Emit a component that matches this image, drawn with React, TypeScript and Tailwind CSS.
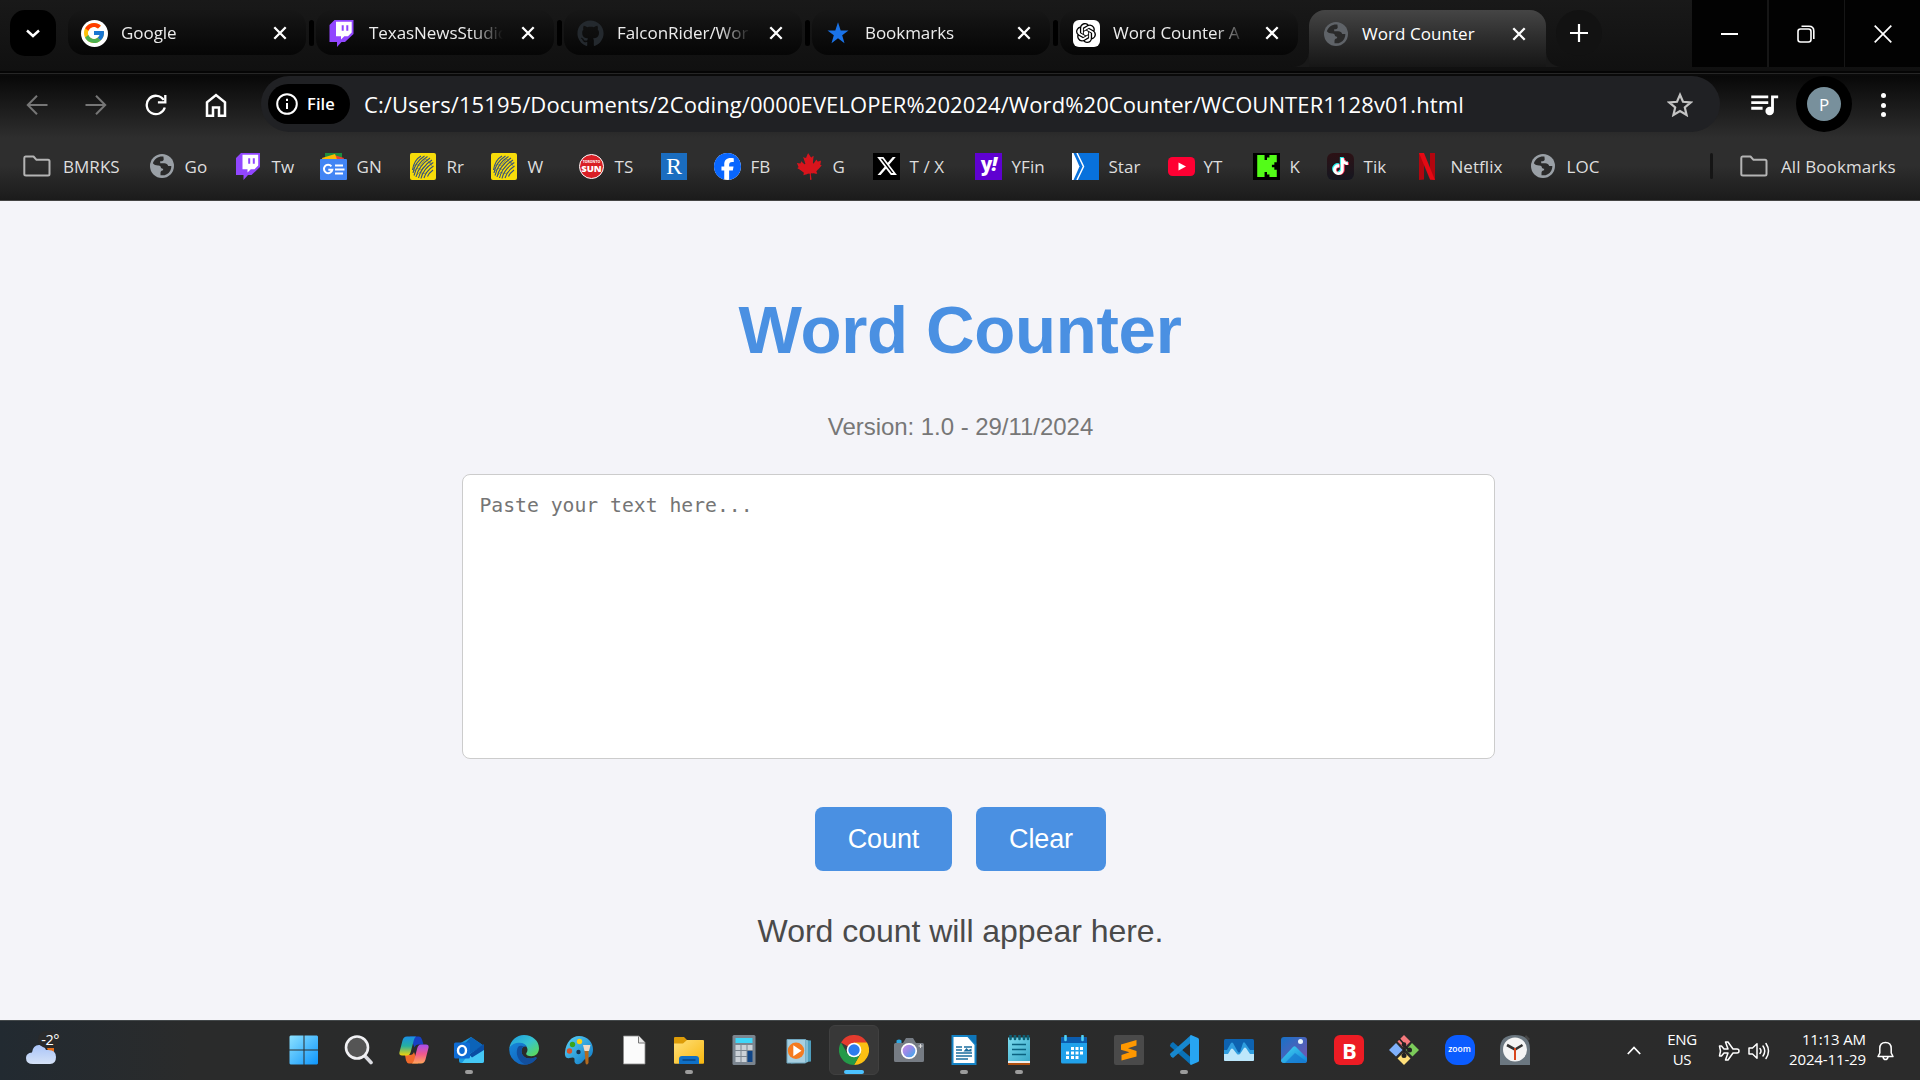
import React, { useId } from "react";
import { FaCanadianMapleLeaf, FaFacebook, FaGithub, FaXTwitter } from "react-icons/fa6";
import { FcGoogle } from "react-icons/fc";
import { SiKick, SiOpenai, SiTiktok } from "react-icons/si";
import { MdQueueMusic } from "react-icons/md";

type IconProps = { className?: string };

const Globe = ({ className = "" }: IconProps) => (
  <svg viewBox="0 0 24 24" className={className}>
    <circle cx="12" cy="12" r="12" fill="currentColor" />
    <path
      d="M13.4 2.6C9 1.9 4.3 4.6 2.9 9.2c1.2 1.7 3.2 2.3 5.6 2.2 1.6 0 2.2.8 2.4 2.2.2.9 1 1.200 2.200 1.100v1.600c-1.400.3-2.600 1.100-2.600 2.500v2.400c3.800.700 7.600-1 9.600-4.300.9-1.500 1.300-3.200 1.200-4.900h-3.100c-.6-1.700-1.900-2.700-3.900-2.700h-4.100V7.200h1.600c1.200 0 1.900-.8 1.900-1.900z"
      fill="#2a2a2a"
    />
  </svg>
);

const TwitchIcon = ({ className = "" }: IconProps) => (
  <svg viewBox="0 0 24 27" className={className}>
    <path d="M5 0h19v14l-8.500 8H12l-4.500 5v-5H0V5z" fill="#9146ff" />
    <path d="M6.500 1.800H22.200V12.500L18.500 16.200H14.800L11.500 19.600V16.200H6.500z" fill="#fff" />
    <path d="M12.200 5.300h2v5.500h-2zM16.800 5.300h2v5.500h-2z" fill="#9146ff" />
  </svg>
);

const FolderIcon = ({ className = "" }: IconProps) => (
  <svg viewBox="0 0 28 22" fill="none" stroke="#b4b4b4" strokeWidth="2" strokeLinejoin="round" className={className}>
    <path d="M2.500 1.500h8l3 3.300h11.500q1.500 0 1.500 1.500V19q0 1.500-1.500 1.500H3Q1.300 20.500 1.300 19V3q0-1.500 1.200-1.500z" />
  </svg>
);

const NewsIcon = () => (
  <svg viewBox="0 0 27 27" className="size-[27px]">
    <path d="M5 0h17v9H5z" fill="#1e8e3e" />
    <path d="M14 2l10 3-2 6h-9z" fill="#ea4335" />
    <path d="M2 5l13-4 3 8H3z" fill="#fbbc04" />
    <rect y="6" width="27" height="21" rx="1" fill="#4285f4" />
    <path d="M11.400 13.300A4.200 4.200 0 1 0 12.300 16.800H8.300" fill="none" stroke="#fff" strokeWidth="2" />
    <path d="M15 12.500h8M15 16.500h9.500M15 20.500h8" stroke="#fff" strokeWidth="2" />
  </svg>
);

const RogersBall = () => (
  <svg viewBox="0 0 26 27" className="h-[27px] w-[26px]">
    <rect width="26" height="27" rx="2" fill="#f7dc0a" />
    <g fill="none" stroke="#35507e" strokeWidth="1.100">
      <path d="M2.500 17Q4 7 11 3M3 20Q5 9 14.500 3M4 22.500Q7 10 17.500 3.500M6 24Q8.500 13 20 5M8.500 25Q11 14 22 7M11 25.500Q13 16 23.300 9.500M14 25Q16 18 23.500 13M17.500 23.500Q19 20 23 17" />
      <path d="M4 13Q6 10 8 12T13 9T18 8T21 9M4 18Q7 14 10 16T16 12T22 13M7 22Q9 18 12 20T19 17" strokeWidth=".5" />
    </g>
  </svg>
);

const SunIcon = () => (
  <div className="ml-[1px] flex size-[25px] flex-col items-center justify-center rounded-full border border-white bg-[#d91f26] text-white">
    <span className="font-['Open_Sans',sans-serif] text-[3.500px] leading-[4px] font-bold tracking-normal">TORONTO</span>
    <span className="font-['Open_Sans',sans-serif] text-[9.500px] leading-[9px] font-extrabold tracking-normal">SUN</span>
  </div>
);

const XLogo = () => (
  <div className="flex size-[27px] items-center justify-center bg-black text-white">
    <FaXTwitter className="size-[22px]" />
  </div>
);

const YahooIcon = () => (
  <div className="flex size-[27px] items-center justify-center bg-[#5f01d1] pb-[3px] font-['Open_Sans',sans-serif] text-[19px] leading-none font-extrabold tracking-[-1px] text-white">
    y<span className="italic">!</span>
  </div>
);

const StarPaperIcon = () => (
  <svg viewBox="0 0 27 27" className="size-[27px]">
    <path d="M0 0h27v27H0z" fill="#0871dc" />
    <path d="M0 0h1.500l6 13.500L1.500 27H0z" fill="#fff" />
    <path d="M5 0l6.500 13.500L5 27" fill="none" stroke="#fff" strokeWidth="1.500" />
  </svg>
);

const YouTubeIcon = () => (
  <svg viewBox="0 0 27 19" className="ml-[1px] h-[19px] w-[27px]">
    <rect width="27" height="19" rx="4.500" fill="#f03" />
    <path d="M10.500 5.500l7.500 4-7.500 4z" fill="#fff" />
  </svg>
);

const KickTile = () => (
  <div className="flex size-[27px] items-center justify-center bg-black text-[#53fc18]">
    <SiKick className="size-[22px]" />
  </div>
);

const TikTokTile = () => (
  <div className="flex size-[27px] items-center justify-center rounded-[6px] bg-gradient-to-b from-[#2c1014] to-[#141620] text-white">
    <SiTiktok className="size-[17px] [filter:drop-shadow(1px_0.5px_0_#fe2c55)_drop-shadow(-1px_-0.5px_0_#25f4ee)]" />
  </div>
);

const NetflixN = () => (
  <svg viewBox="0 0 16 27" className="ml-[5px] h-[27px] w-[16px]">
    <path d="M0 0h5v26.500L0 27zM11 0h5v27l-5-.5z" fill="#b1060f" />
    <path d="M0 0h5l11 27-5-.6z" fill="#e50914" />
  </svg>
);

const CloseX = () => (
  <svg viewBox="0 0 14 14" className="size-[14px] shrink-0" stroke="#fff" strokeWidth="2.300">
    <path d="M1.300 1.300l11.400 11.400M12.700 1.300L1.300 12.700" />
  </svg>
);

const BlueStar = () => (
  <svg viewBox="0 0 24 24" className="ml-[1px] size-[24px]" fill="#1a73e8">
    <path d="M12 17.300l6.500 4.900-2.300-8L22.500 9.400h-7.800L12 1.200 9.300 9.400H1.500l6.300 4.800-2.300 8z" />
  </svg>
);

const inactiveTabs: { title: string; icon: React.ReactNode }[] = [
  {
    title: "Google",
    icon: (
      <div className="flex size-[27px] items-center justify-center rounded-full bg-white">
        <FcGoogle className="size-[24px]" />
      </div>
    ),
  },
  { title: "TexasNewsStudio", icon: <TwitchIcon className="h-[27px] w-[25px]" /> },
  { title: "FalconRider/Wor", icon: <FaGithub className="size-[27px] text-[#24292e]" /> },
  { title: "Bookmarks", icon: <BlueStar /> },
  {
    title: "Word Counter A",
    icon: (
      <div className="flex size-[27px] items-center justify-center rounded-[6px] bg-white text-black">
        <SiOpenai className="size-[20px]" />
      </div>
    ),
  },
];

function TabStrip() {
  return (
    <div className="flex h-[71px] bg-gradient-to-b from-[#191919] to-[#101010] pt-[10px] pl-[10px]">
      <button className="flex size-[46px] items-center justify-center rounded-[15px] bg-black">
        <svg viewBox="0 0 14 9" className="h-[9px] w-[14px]" fill="none" stroke="#fff" strokeWidth="2.400">
          <path d="M1 1.500l6 5.500 6-5.500" />
        </svg>
      </button>
      <div className="ml-[12px] flex">
        {inactiveTabs.map((tab, i) => (
          <div key={tab.title} className="flex w-[248px]">
            <div className="flex h-[45px] w-[238px] items-center rounded-[16px] bg-gradient-to-b from-[#171717] to-[#060606] pt-[1px] pr-[19px] pl-[12.500px]">
              <div className="w-[40.500px] shrink-0">{tab.icon}</div>
              <div className="mr-auto w-[134px] overflow-hidden text-[17px] tracking-[-0.050px] whitespace-nowrap text-[#ececec] [mask-image:linear-gradient(to_right,black_76%,transparent)]">
                {tab.title}
              </div>
              <CloseX />
            </div>
            {i < 4 && <div className="mt-[10px] ml-[3px] h-[26px] w-[5px] rounded-full bg-black" />}
          </div>
        ))}
      </div>
      <div className="relative ml-px flex h-[57px] w-[237px] items-center rounded-t-[16px] bg-gradient-to-b from-[#454545] to-[#161616] pr-[20px] pb-[10px] pl-[15px]">
        <svg viewBox="0 0 18 18" className="absolute bottom-0 -left-[18px] size-[18px]">
          <path d="M18 0v18H0Q18 18 18 0z" fill="#191919" />
        </svg>
        <svg viewBox="0 0 18 18" className="absolute -right-[18px] bottom-0 size-[18px]">
          <path d="M0 0v18h18Q0 18 0 0z" fill="#191919" />
        </svg>
        <Globe className="mr-[14px] size-[24px] text-[#5f6368]" />
        <div className="mr-auto text-[17px] tracking-[0.050px] text-white">Word Counter</div>
        <CloseX />
      </div>
      <button className="ml-[10px] flex size-[46px] items-center justify-center rounded-full bg-[#121212]">
        <svg viewBox="0 0 18 18" className="size-[18px]" stroke="#fff" strokeWidth="2.200">
          <path d="M9 0v18M0 9h18" />
        </svg>
      </button>
      <div className="-mt-[10px] ml-auto flex h-[67px] gap-[1.500px] bg-[#161616]">
        <div className="flex w-[75px] items-center justify-center bg-[#020202]">
          <div className="h-[2px] w-[17px] bg-white" />
        </div>
        <div className="flex w-[75px] items-center justify-center bg-[#020202]">
          <svg viewBox="0 0 18 18" className="size-[18px]" fill="none" stroke="#fff" strokeWidth="1.600">
            <rect x="1" y="4" width="13" height="13" rx="2.500" />
            <path d="M4.500 1.300H12Q16.800 1.300 16.800 6v8" />
          </svg>
        </div>
        <div className="flex w-[75px] items-center justify-center bg-[#020202]">
          <svg viewBox="0 0 18 18" className="size-[18px]" stroke="#fff" strokeWidth="1.700">
            <path d="M.7.7l16.600 16.600M17.300.7L.7 17.300" />
          </svg>
        </div>
      </div>
    </div>
  );
}

function AddressRow() {
  return (
    <div className="flex h-[56px] items-center pl-[26px]">
      <svg viewBox="0 0 22 20" className="mt-[2px] h-[20px] w-[22px]" fill="none" stroke="#767676" strokeWidth="2">
        <path d="M21.500 10H2M11 .8L1.800 10l9.200 9.200" />
      </svg>
      <svg viewBox="0 0 22 20" className="mt-[2px] ml-[37px] h-[20px] w-[22px]" fill="none" stroke="#767676" strokeWidth="2">
        <path d="M.5 10H20M11 .8l9.200 9.200-9.200 9.200" />
      </svg>
      <svg viewBox="0 0 22 22" className="mt-[2px] ml-[38px] size-[22px]" fill="none" stroke="#fff" strokeWidth="2.300">
        <path d="M19.800 13.500A9.200 9.200 0 1 1 18.700 6" />
        <path d="M20.300 1v7.400h-7.400" />
      </svg>
      <svg viewBox="0 0 22 24" className="mt-[1px] ml-[38px] h-[24px] w-[22px]" fill="none" stroke="#fff" strokeWidth="2.500">
        <path d="M2 22.700V9.300L11 2l9 7.300v13.400h-6V14.500H8v8.200z" />
      </svg>
      <div className="ml-[34px] flex h-[56px] w-[1459px] items-center rounded-full bg-[#202124] pr-[27px] pl-[7px]">
        <div className="flex h-[40px] w-[82px] items-center rounded-full bg-black pl-[8px]">
          <svg viewBox="0 0 22 22" className="size-[22px]" fill="none" stroke="#fff" strokeWidth="2">
            <circle cx="11" cy="11" r="9.800" />
            <path d="M11 10v6M11 5.800v2.200" />
          </svg>
          <span className="ml-[9px] pt-px text-[16.500px] font-semibold tracking-[0.100px] text-white">File</span>
        </div>
        <span className="ml-[14px] text-[22px] tracking-[0.085px] whitespace-nowrap text-white">
          C:/Users/15195/Documents/2Coding/0000EVELOPER%202024/Word%20Counter/WCOUNTER1128v01.html
        </span>
        <svg viewBox="0 0 26 25" className="ml-auto h-[25px] w-[26px]" fill="none" stroke="#c4c4c4" strokeWidth="2.200">
          <path d="M13 2.800l3 7 7.600.7-5.800 5 1.800 7.500-6.600-4-6.600 4 1.800-7.500-5.800-5 7.600-.7z" />
        </svg>
      </div>
      <MdQueueMusic className="ml-[27px] size-[34px] text-white" />
      <div className="ml-[15px] flex size-[56px] items-center justify-center rounded-full bg-black">
        <div className="flex size-[34px] items-center justify-center rounded-full bg-[#78909c] pt-px text-[17px] text-white">P</div>
      </div>
      <div className="mt-[2px] ml-[29px] flex flex-col gap-[4.500px]">
        <div className="size-[5px] rounded-full bg-white" />
        <div className="size-[5px] rounded-full bg-white" />
        <div className="size-[5px] rounded-full bg-white" />
      </div>
    </div>
  );
}

const bookmarks: { label: string; width: string; icon: React.ReactNode }[] = [
  { label: "Go", width: "w-[87px]", icon: <Globe className="ml-[2px] size-[24px] text-[#9aa0a6]" /> },
  { label: "Tw", width: "w-[85px]", icon: <TwitchIcon className="ml-px h-[27px] w-[24px]" /> },
  { label: "GN", width: "w-[90px]", icon: <NewsIcon /> },
  { label: "Rr", width: "w-[81px]", icon: <RogersBall /> },
  { label: "W", width: "w-[87px]", icon: <RogersBall /> },
  { label: "TS", width: "w-[83px]", icon: <SunIcon /> },
  {
    label: "",
    width: "w-[53px]",
    icon: (
      <div className="flex h-[27px] w-[26px] items-center justify-center bg-[#1a6dc0] font-['Liberation_Serif',serif] text-[24px] leading-none text-white">
        R
      </div>
    ),
  },
  {
    label: "FB",
    width: "w-[82px]",
    icon: (
      <div className="rounded-full bg-white">
        <FaFacebook className="size-[27px] text-[#0866ff]" />
      </div>
    ),
  },
  { label: "G", width: "w-[77px]", icon: <FaCanadianMapleLeaf className="size-[27px] -rotate-6 text-[#d8141c]" /> },
  { label: "T / X", width: "w-[102px]", icon: <XLogo /> },
  { label: "YFin", width: "w-[97px]", icon: <YahooIcon /> },
  { label: "Star", width: "w-[95px]", icon: <StarPaperIcon /> },
  { label: "YT", width: "w-[86px]", icon: <YouTubeIcon /> },
  { label: "K", width: "w-[74px]", icon: <KickTile /> },
  { label: "Tik", width: "w-[87px]", icon: <TikTokTile /> },
  { label: "Netflix", width: "w-[116px]", icon: <NetflixN /> },
  { label: "LOC", width: "w-[80px]", icon: <Globe className="ml-[1px] size-[24px] text-[#9aa0a6]" /> },
];

function BookmarkBar() {
  return (
    <div className="flex h-[68px] items-center text-[17px] tracking-[0.050px] whitespace-nowrap text-[#dedede]">
      <div className="flex w-[148px] items-center pl-[23px]">
        <FolderIcon className="mr-[12px] h-[22px] w-[28px]" />
        <span className="pt-px">BMRKS</span>
      </div>
      {bookmarks.map((b, i) => (
        <div key={i} className={`flex shrink-0 items-center ${b.width}`}>
          <div className="flex w-[36.500px] shrink-0 items-center">{b.icon}</div>
          <span className="pt-px">{b.label}</span>
        </div>
      ))}
      <div className="ml-auto h-[26px] w-[3px] rounded-full bg-[#151515]" />
      <FolderIcon className="ml-[27px] h-[22px] w-[28px]" />
      <span className="mr-[25px] ml-[13px] w-[114px] pt-px tracking-[0.100px]">All Bookmarks</span>
    </div>
  );
}

function WordCounterPage() {
  return (
    <main className="flex h-[819px] flex-col items-center bg-[#f4f4f9] pt-[91px] font-['Liberation_Sans',Arial,sans-serif]">
      <h1 className="text-[67.200px] leading-[76px] font-bold tracking-[-0.300px] text-[#4a90e2]">Word Counter</h1>
      <p className="mt-[45px] pl-[1px] text-[24px] leading-[28px] tracking-[-0.040px] text-[#777]">Version: 1.0 - 29/11/2024</p>
      <textarea
        className="mt-[33px] ml-[36px] h-[285px] w-[1033px] shrink-0 resize-none rounded-[8px] border border-[#ccc] bg-white px-[17px] py-[18px] font-['DejaVu_Sans_Mono',monospace] text-[19.730px] leading-[26px] text-[#333] outline-none placeholder:text-[#757575]"
        placeholder="Paste your text here..."
      />
      <div className="mt-[48px] flex gap-[24px] text-[27px] leading-[64px] tracking-[-0.100px] text-white">
        <button className="h-[64px] w-[137px] rounded-[8px] bg-[#4a90e2] pl-[1px]">Count</button>
        <button className="h-[64px] w-[130px] rounded-[8px] bg-[#4a90e2] pl-[1px]">Clear</button>
      </div>
      <p className="mt-[42px] pl-[1px] text-[32px] leading-[36px] tracking-[-0.030px] text-[#4a4a4a]">Word count will appear here.</p>
    </main>
  );
}

/* Taskbar icons, each drawn on a 30-unit grid */

function Art({ children }: { children: React.ReactNode }) {
  return (
    <svg viewBox="0 0 30 30" className="size-[30px]">
      {children}
    </svg>
  );
}

function Grad({ id, from, to, mid }: { id: string; from: string; to: string; mid?: string }) {
  return (
    <linearGradient id={id} x1="0" y1="0" x2="1" y2="1">
      <stop offset="0" stopColor={from} />
      {mid && <stop offset=".5" stopColor={mid} />}
      <stop offset="1" stopColor={to} />
    </linearGradient>
  );
}

const StartIcon = () => (
  <Art>
    <defs>
      <linearGradient id="win" gradientUnits="userSpaceOnUse" x1="0" y1="0" x2="30" y2="30">
        <stop offset="0" stopColor="#8fe3ff" />
        <stop offset="1" stopColor="#0a93fb" />
      </linearGradient>
    </defs>
    <path d="M1.500.5H14.500v14H.5v-13zM15.500 .5h12.500l1 1v13H15.500zM.5 15.500H14.500v14H1.500l-1-1zM15.500 15.500h13.500v13l-1 1H15.500z" fill="url(#win)" />
  </Art>
);

const SearchIcon = () => (
  <Art>
    <path d="M20.500 20.500l6.500 7" stroke="#dcdde2" strokeWidth="3.600" strokeLinecap="round" />
    <circle cx="13" cy="12.500" r="11" fill="#555" stroke="#f1f1f4" strokeWidth="2.600" />
  </Art>
);

const CopilotIcon = () => (
  <Art>
    <defs>
      <linearGradient id="cp1" x1="0" y1="0" x2="0" y2="1">
        <stop offset="0" stopColor="#1a8fe6" />
        <stop offset=".5" stopColor="#25b0a0" />
        <stop offset="1" stopColor="#f3d409" />
      </linearGradient>
      <linearGradient id="cp2" x1="0" y1="0" x2="0" y2="1">
        <stop offset="0" stopColor="#a44df0" />
        <stop offset=".5" stopColor="#f0588d" />
        <stop offset="1" stopColor="#ffa65a" />
      </linearGradient>
    </defs>
    <path d="M11 1.500h9q2 0 3 3l1.500 5h-5q-3 0-4 3z" fill="#1741c4" />
    <path d="M19 28.500h-9q-2 0-3-3l-1-5.500h5q3 0 4-3z" fill="#f06a2b" />
    <path d="M8 1.500h9q-1.500 1-2.300 4l-3 11.500Q10.700 20.500 8 20.500H3Q0 20.500.4 17.500L3.500 5.500Q4.500 1.500 8 1.500z" fill="url(#cp1)" />
    <path d="M22 28.500h-9q1.500-1 2.300-4l3-11.500Q19.300 9.500 22 9.500h5q3 0 2.600 3L26.500 24.500Q25.500 28.500 22 28.500z" fill="url(#cp2)" />
  </Art>
);

const OutlookIcon = () => (
  <Art>
    <path d="M5 9L17 2l13 9v15q0 2-2 2H7q-2 0-2-2z" fill="#1a9be0" />
    <path d="M11 8.500L17 2l12.500 8.500L16 19z" fill="#0c63b8" />
    <path d="M14 20L30 10v16q0 2-2 2H8z" fill="#45c8f5" />
    <path d="M15 19.500L30 9v6L18 22.500z" fill="#0a4ea3" />
    <rect y="7.500" width="16" height="16" rx="1.500" fill="#0f6cd4" />
    <ellipse cx="8" cy="15.500" rx="4" ry="4.600" fill="none" stroke="#fff" strokeWidth="2.400" />
  </Art>
);

const EdgeIcon = () => (
  <Art>
    <defs>
      <Grad id="ed1" from="#1c9be2" mid="#37c3d0" to="#62dd45" />
      <Grad id="ed2" from="#1787d9" to="#0f58b5" />
    </defs>
    <path d="M.3 13.500C1.300 5.500 7.500 0 15 0c8.500 0 15 6 15 13.200 0 5-3.500 8-7.500 8-3.500 0-5.300-1.300-5.300-2.500 0-1 1.300-1.600 1.300-4 0-3.500-3.500-6-8-6-4.500 0-8.500 2.300-10.200 4.800z" fill="url(#ed1)" />
    <path d="M.3 13.500C2 9.500 6 7.800 10.500 7.800c4 0 6.500 2 7.500 4.200-3-1.500-5.500.5-5.500 4 0 5 5 9 11.500 7 2-.6 3-1 3.500-.5.4.4 0 1-.6 1.700A15 15 0 0 1 .3 13.500z" fill="url(#ed2)" />
    <path d="M9.500 11.500C7.500 14 7 19 9.500 23.500S17 29.800 17 29.800c4-.5 8-2.500 10.400-6 .5-1-.4-1.400-3.400-.8-6.500 2-11.500-2-11.500-7 0-2.500 1-4 2.500-4.500-2.500-1-4.500-.8-5.500 0z" fill="#124f9e" />
  </Art>
);

const PaintIcon = () => (
  <Art>
    <defs>
      <Grad id="pal" from="#5bd3f6" to="#0d76c4" />
    </defs>
    <path d="M15 1C24 1 29 7.500 29 14.500c0 6-3 8-6 8.500-3 .5-4 5-8 6-3 .8-5-1-4.500-4 .5-3-2-3-5-2C2 24 .5 21 1 17 2 7.500 7.500 1 15 1z" fill="url(#pal)" />
    <circle cx="15.500" cy="6.500" r="2.700" fill="#fcd116" />
    <circle cx="8.500" cy="9.500" r="2.700" fill="#3aa51b" />
    <circle cx="5.500" cy="16" r="2.700" fill="#d8552c" />
    <circle cx="14.500" cy="17" r="2.200" fill="#17324f" />
    <path d="M20.500 15h4V28q-2 3-3 0z" fill="#b36a1e" />
    <path d="M19 10h7.500l-1.500 6h-4.500z" fill="#efd9c4" />
  </Art>
);

const DocIcon = () => (
  <Art>
    <path d="M4.500 1h15.500l6 6.500V29H4.500z" fill="#fbfbfb" stroke="#8a8a8a" strokeWidth=".8" />
    <path d="M19.500 1.500V8H26" fill="#e8e8e8" stroke="#777" />
  </Art>
);

const ExplorerIcon = () => (
  <Art>
    <defs>
      <Grad id="fold" from="#ffe07a" to="#f8b70e" />
    </defs>
    <path d="M0 3q0-1 1-1h9l3 3v5H0z" fill="#dd9c08" />
    <path d="M0 8.500h9L13 5h16q1 0 1 1v22q0 .8-1 .8H1q-1 0-1-.8z" fill="url(#fold)" />
    <path d="M5 29v-5q0-3 3-3h14q3 0 3 3v5z" fill="#0f70c6" />
    <path d="M8.500 25h13" stroke="#083f7c" strokeWidth="1.400" />
  </Art>
);

const CalculatorIcon = () => (
  <Art>
    <rect x="3.500" width="23" height="30" rx="1.500" fill="#7b858f" />
    <rect x="6.500" y="3" width="17" height="5" fill="#3fd6f8" />
    <path d="M6.500 10h5v5h-5zM12.500 10h5v5h-5zM18.500 10h5v5h-5zM6.500 16h5v5h-5zM12.500 16h5v5h-5zM6.500 22h5v5h-5zM12.500 22h5v5h-5z" fill="#cbd1d7" />
    <path d="M18.500 16h5v11h-5z" fill="#0f4587" />
  </Art>
);

const MediaIcon = () => (
  <Art>
    <path d="M7 4l20 1.500v21L7 28.500z" fill="#4f9ebd" />
    <path d="M3 4.500h18.500V28H3z" fill="#a7cfe0" stroke="#6fa7c0" />
    <path d="M21.500 4.500L24 5.500V27l-2.500 1z" fill="#82bcd2" />
    <circle cx="12" cy="15.800" r="8.200" fill="#f47b20" />
    <path d="M9.300 10.300l8.200 5.500-8.200 5.500z" fill="#fff" />
  </Art>
);

const ChromeIcon = () => (
  <Art>
    <path d="M15 15L2 7.500A15 15 0 0 1 28 7.500z" fill="#e33b2e" />
    <path d="M15 15V7.500h13A15 15 0 0 1 15 30l6.500-11.300z" fill="#fcc013" />
    <path d="M15 15l6.500 3.700L15 30A15 15 0 0 1 2 7.500l6.500 11.200z" fill="#249a48" />
    <circle cx="15" cy="15" r="7.300" fill="#fff" />
    <circle cx="15" cy="15" r="5.700" fill="#2b7ced" />
  </Art>
);

const CameraIcon = () => (
  <Art>
    <defs>
      <Grad id="lens" from="#d58be8" mid="#8d8ce8" to="#25b5ee" />
    </defs>
    <path d="M2.500 5.500Q5 3.500 7.500 5.500V8h-5z" fill="#2ba9e6" />
    <path d="M9 8l3-5h7l3 5h6.500Q30 8 30 9.500v16Q30 27 28.500 27h-27Q0 27 0 25.500v-16Q0 8 1.500 8z" fill="#767c84" />
    <circle cx="15" cy="16" r="7.200" fill="url(#lens)" stroke="#fff" strokeWidth="1.700" />
    <path d="M26.500 9v4M24.500 11h4" stroke="#ddd" />
  </Art>
);

const WriterIcon = () => (
  <Art>
    <path d="M3.500 1H19l7.500 8.500V29h-23z" fill="#fff" stroke="#1583c5" strokeWidth="2" />
    <path d="M18 0h9.500v10z" fill="#0f75b8" />
    <path d="M7 12h6M7 15h6M7 18h16M7 21h16M7 24h12M15 12h8" stroke="#1a6d9e" strokeWidth="1.300" />
    <path d="M14.500 16.500l3-3.500 2 2 3-1.500v3z" fill="#1a6d9e" />
  </Art>
);

const NotepadIcon = () => (
  <Art>
    <defs>
      <Grad id="np" from="#7cdbef" to="#38a8c8" />
    </defs>
    <path d="M4 2.500h22v24H4z" fill="url(#np)" />
    <path d="M4 26h22v2H4z" fill="#eee" />
    <path d="M4 28h22v2H4z" fill="#b0500f" />
    <path d="M8 9.500h14M8 14.500h14M8 19.500h14" stroke="#0b6280" strokeWidth="1.700" />
    <path d="M6.500 0v4M11 0v4M15.500 0v4M20 0v4M24 0v4" stroke="#0e5f73" strokeWidth="2.600" strokeLinecap="round" />
  </Art>
);

const CalendarIcon = () => (
  <Art>
    <rect x="2" y="2" width="26" height="26.500" rx="1.500" fill="#21a1ea" />
    <path d="M2 3.500Q2 2 3.500 2h23Q28 2 28 3.500V8H2z" fill="#0b5cae" />
    <path d="M6.500 1v4M23.500 1v4" stroke="#4fd1f6" strokeWidth="2.600" strokeLinecap="round" />
    <path d="M12 12h3v3h-3zM16.500 12h3v3h-3zM21 12h3v3h-3zM7 16.500h3v3H7zM12 16.500h3v3h-3zM16.500 16.500h3v3h-3zM21 16.500h3v3h-3zM7 21h3v3H7zM12 21h3v3h-3zM16.500 21h3v3h-3z" fill="#fff" />
  </Art>
);

const SublimeIcon = () => (
  <Art>
    <rect width="30" height="30" rx="2" fill="#4a4a4a" />
    <path d="M22.500 5v5.500L14 13.300l8.500 2.700v5.500L7.500 25.500V20l8-2.700-8.500-2.500V9.500z" fill="#ff9800" />
  </Art>
);

const VsCodeIcon = () => (
  <Art>
    <path d="M2 8.500L4 7l18 15.500V30L.8 11z" fill="#0a72b8" />
    <path d="M2 21.500L4 23 22 7.500V0L.8 19z" fill="#1788cf" />
    <path d="M22 0l7 3q1 .5 1 1.500v21q0 1-1 1.500l-7 3q-1-.5-1-2V2q0-1.500 1-2z" fill="#27a5f2" />
  </Art>
);

const MonitorIcon = () => (
  <Art>
    <rect y="4" width="30" height="22" rx="1.500" fill="#0d62b0" />
    <path d="M0 15h3l4-7q1-1 2 0l5 9q1 1 2 0l3-9q1-1.500 2 0l5 7h4v10H0z" fill="#2f9ee0" />
    <path d="M0 19h4l3-5q1-1 2 0l4 5q1 1 3 0l4-6q1-1 2 0l4 6h4v6q0 1-1 1H1q-1 0-1-1z" fill="#bde7fb" />
  </Art>
);

const PhotosIcon = () => (
  <Art>
    <defs>
      <Grad id="ph" from="#1672c8" to="#7a54ae" />
      <Grad id="ph2" from="#45d6f2" to="#1182d8" />
    </defs>
    <rect x="2" y="2" width="26" height="26" rx="3" fill="url(#ph)" />
    <path d="M2 25L14 12q1.500-1.500 3 0l11 11v2q0 3-3 3H5q-3 0-3-3z" fill="url(#ph2)" />
    <path d="M6 28l10-10 12 9-2 1z" fill="#1778cf" opacity=".7" />
    <circle cx="21.500" cy="6.500" r="2.500" fill="#e9f4fb" />
  </Art>
);

const BitdefenderIcon = () => (
  <div className="flex size-[30px] shrink-0 items-center justify-center rounded-[6px] bg-[#ed1c24] font-['Open_Sans',sans-serif] text-[22px] leading-none font-bold text-white">
    B
  </div>
);

const GitIcon = () => (
  <Art>
    <path d="M15 0l6.500 6.500L15 13 8.500 6.500z" fill="#f5797c" />
    <path d="M23 8l7 7-6.500 6.500L17 15z" fill="#7bcb5a" />
    <path d="M7 8l6.500 7L7 21.500 0 15z" fill="#7fb0fb" />
    <path d="M15 17l6.500 6.500L15 30l-6.500-6.500z" fill="#ffe07a" />
    <path d="M10.500 4L15 9v11M15 10l5 5" stroke="#222" strokeWidth="1.700" fill="none" />
    <circle cx="15" cy="9.500" r="2.300" fill="#222" />
    <circle cx="20.500" cy="15" r="2.500" fill="#222" />
    <circle cx="15" cy="20.500" r="2.500" fill="#222" />
  </Art>
);

const ZoomIcon = () => (
  <div className="flex size-[30px] shrink-0 items-center justify-center rounded-[12px] bg-[#0b5cff] pb-[2px] text-[8.500px] leading-none font-semibold text-white">
    zoom
  </div>
);

const ClockIcon = () => (
  <Art>
    <path d="M24 3l2-3 4 4-3 3z" fill="#444" />
    <path d="M0 30V14Q0 0 15 0t15 14v16z" fill="#6b7780" />
    <circle cx="15" cy="14.500" r="12" fill="#f4f4f4" />
    <path d="M7 10l8 4.500L22.500 10" fill="none" stroke="#333" strokeWidth="2.600" />
    <path d="M15 13v12" stroke="#d8451b" strokeWidth="2" />
  </Art>
);

const taskbarApps: { icon: React.ReactNode; state?: "open" | "active" }[] = [
  { icon: <StartIcon /> },
  { icon: <SearchIcon /> },
  { icon: <CopilotIcon /> },
  { icon: <OutlookIcon />, state: "open" },
  { icon: <EdgeIcon /> },
  { icon: <PaintIcon /> },
  { icon: <DocIcon /> },
  { icon: <ExplorerIcon />, state: "open" },
  { icon: <CalculatorIcon /> },
  { icon: <MediaIcon /> },
  { icon: <ChromeIcon />, state: "active" },
  { icon: <CameraIcon /> },
  { icon: <WriterIcon />, state: "open" },
  { icon: <NotepadIcon />, state: "open" },
  { icon: <CalendarIcon /> },
  { icon: <SublimeIcon /> },
  { icon: <VsCodeIcon />, state: "open" },
  { icon: <MonitorIcon /> },
  { icon: <PhotosIcon /> },
  { icon: <BitdefenderIcon /> },
  { icon: <GitIcon /> },
  { icon: <ZoomIcon /> },
  { icon: <ClockIcon /> },
];

function Weather() {
  const id = useId();
  return (
    <div className="relative mt-[13px] ml-[25px] h-[40px] w-[38px] shrink-0">
      <svg viewBox="0 0 38 40" className="h-[40px] w-[38px]">
        <defs>
          <linearGradient id={id} x1="0" y1="0" x2="0" y2="1">
            <stop offset="0" stopColor="#a9c4f8" />
            <stop offset="1" stopColor="#d5e2f7" />
          </linearGradient>
        </defs>
        <path d="M22 14h7v5h-5z" fill="#e8701a" />
        <path d="M8 30q-7 0-7-6 0-5 6-5.500Q8 11 14 11q5 0 7 5 10-1 10 7 0 7-6 7z" fill={`url(#${id})`} />
      </svg>
      <div className="absolute -top-[3px] right-[4px] rounded-full bg-[#2a2a2a] pl-[3px] text-[14.500px] leading-[17px] tracking-[-0.500px] text-white">-2°</div>
    </div>
  );
}

function Taskbar() {
  return (
    <footer className="flex h-[60px] border-t border-[#43484a] bg-gradient-to-r from-[#222a31] via-[#2a2b2b] via-10% to-[#2b2b2b] text-white">
      <Weather />
      <div className="ml-[213px] flex">
        {taskbarApps.map((app, i) => (
          <div key={i} className="flex w-[55.060px] justify-center pt-[4px]">
            <div
              className={
                app.state === "active"
                  ? "flex h-[50px] w-[50px] flex-col items-center rounded-[6px] border border-[#404040] bg-[#383838] pt-[9px]"
                  : "flex h-[50px] w-[50px] flex-col items-center pt-[10px]"
              }
            >
              {app.icon}
              {app.state === "open" && <div className="mt-[5px] h-[4px] w-[8px] rounded-full bg-[#9c9c9c]" />}
              {app.state === "active" && <div className="mt-[5px] h-[4px] w-[20px] shrink-0 rounded-full bg-[#4cc2ff]" />}
            </div>
          </div>
        ))}
      </div>
      <div className="mr-[26px] ml-auto flex items-center">
        <svg viewBox="0 0 14 9" className="h-[9px] w-[14px]" fill="none" stroke="#fff" strokeWidth="1.800">
          <path d="M.8 8L7 1.500 13.200 8" />
        </svg>
        <div className="ml-[25px] w-[32px] pb-[3px] text-center text-[15px] leading-[20px] tracking-[-0.400px]">
          ENG
          <br />
          US
        </div>
        <svg viewBox="0 0 22 20" className="ml-[20px] h-[20px] w-[22px]" fill="none" stroke="#fff" strokeWidth="1.500" strokeLinejoin="round">
          <path d="M6 8L3.500 5H1.500l1 5-1 5h2L6 12h4l-2.500 7H10l5-7h4q2 0 2-2t-2-2h-4L10 1H7.500L10 8z" />
        </svg>
        <svg viewBox="0 0 22 20" className="ml-[8px] h-[20px] w-[22px]" fill="none" stroke="#fff" strokeWidth="1.500" strokeLinejoin="round" strokeLinecap="round">
          <path d="M1 7h3.500L9 2.800v14.400L4.500 13H1zM12 7.500q2 2.500 0 5M15 5q3.500 5 0 10M18 2.500q5 7.500 0 15" />
        </svg>
        <div className="ml-[15px] w-[81px] pb-[4px] text-right text-[15px] leading-[20px] tracking-[-0.130px] whitespace-nowrap">
          11:13 AM
          <br />
          2024-11-29
        </div>
        <svg viewBox="0 0 17 20" className="ml-[11px] h-[20px] w-[17px]" fill="none" stroke="#fff" strokeWidth="1.500" strokeLinejoin="round">
          <path d="M1 15.500L2.800 12V7.500q0-6 5.700-6t5.700 6V12l1.800 3.500zM6 16q.5 2.500 2.500 2.500T11 16" />
        </svg>
      </div>
    </footer>
  );
}

export default function App() {
  return (
    <div className="flex h-[1080px] w-[1920px] flex-col overflow-hidden font-['Open_Sans','Noto_Sans',sans-serif]">
      <TabStrip />
      <div className="h-[2px] bg-[#050505]" />
      <div className="h-px bg-[#262626]" />
      <div className="h-[2px] bg-[#0a0a0a]" />
      <div className="flex h-[125px] flex-col border-b border-[#444] bg-[linear-gradient(to_bottom,#080808_0%,#2e2e2e_50%,#2e2e2e_72%,#1b1b1b_100%)]">
        <AddressRow />
        <BookmarkBar />
      </div>
      <WordCounterPage />
      <Taskbar />
    </div>
  );
}
